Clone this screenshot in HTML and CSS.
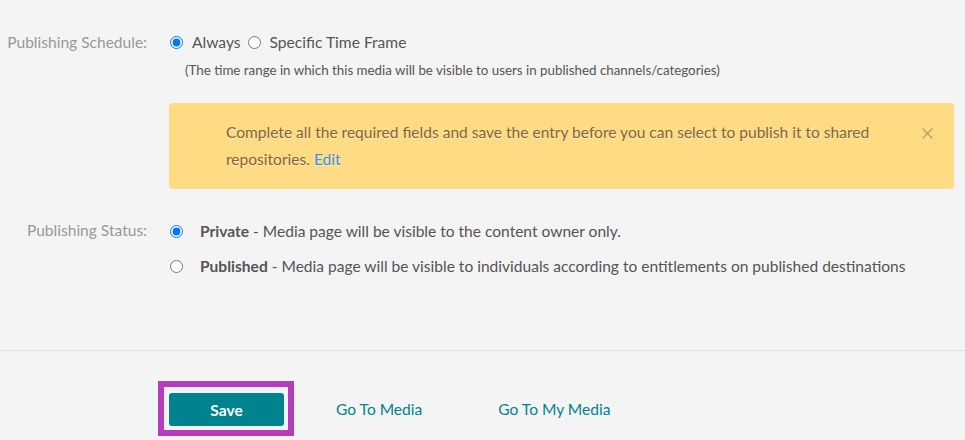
FILE: index.html
```html
<!DOCTYPE html>
<html lang="en">
<head>
<meta charset="utf-8">
<title>Publishing</title>
<link rel="stylesheet" href="styles.css">
</head>
<body>
<main class="form">
  <section class="row">
    <div class="label">Publishing Schedule:</div>
    <div class="field">
      <div class="inline-options">
        <label class="opt"><input type="radio" name="sched" checked><span>Always</span></label>
        <label class="opt"><input type="radio" name="sched"><span>Specific Time Frame</span></label>
      </div>
      <p class="help">(The time range in which this media will be visible to users in published channels/categories)</p>
      <div class="alert">
        <p>Complete all the required fields and save the entry before you can select to publish it to shared repositories. <a href="#" class="alert-link">Edit</a></p>
        <button class="close" type="button" aria-label="Close">
          <svg width="11" height="11" viewBox="0 0 11 11"><path d="M0.5 0.5 L10.5 10.5 M10.5 0.5 L0.5 10.5" stroke="#b9a168" stroke-width="1.4" fill="none"/></svg>
        </button>
      </div>
    </div>
  </section>

  <section class="row status">
    <div class="label">Publishing Status:</div>
    <div class="field stacked">
      <label class="opt wide"><input type="radio" name="status" checked><span><b>Private</b> - Media page will be visible to the content owner only.</span></label>
      <label class="opt wide"><input type="radio" name="status"><span><b>Published</b> - Media page will be visible to individuals according to entitlements on published destinations</span></label>
    </div>
  </section>
</main>

<footer class="actions">
  <div class="focus-ring"><button class="btn-save" type="button">Save</button></div>
  <a href="#" class="link">Go To Media</a>
  <a href="#" class="link">Go To My Media</a>
</footer>
</body>
</html>
```

FILE: styles.css
```css
* { box-sizing: border-box; }
html, body { margin: 0; padding: 0; }
body {
  background: #f4f4f4;
  font-family: Lato, "Open Sans", Arial, sans-serif;
  color: #555;
  width: 965px;
  height: 440px;
  overflow: hidden;
}
.form { padding-top: 32px; }
.row {
  display: grid;
  grid-template-columns: 147px 1fr;
  column-gap: 22px;
  padding-right: 11px;
}
.label {
  text-align: right;
  color: #999;
  font-size: 15.55px;
  line-height: 20px;
  white-space: nowrap;
}
.inline-options { display: flex; align-items: center; gap: 6px; }
.opt {
  display: flex;
  align-items: center;
  font-size: 15.6px;
  line-height: 20px;
  color: #555;
}
.opt input {
  width: 13px;
  height: 13px;
  margin: 0 9px 0 1px;
  flex: none;
}
.help {
  margin: 10px 0 0 16px;
  font-size: 13.33px;
  line-height: 16px;
  color: #555;
}
.alert {
  position: relative;
  margin-top: 25px;
  background: #ffdb83;
  border-radius: 4px;
  padding: 16px 70px 16px 57px;
  color: #86643a;
  text-shadow: 0 1px 0 rgba(255,255,255,0.5);
  font-size: 15.55px;
  line-height: 27px;
}
.alert p { margin: 0; }
.alert-link { color: #3d8fe0; text-decoration: none; }
.close {
  position: absolute;
  top: 25px;
  right: 21px;
  border: 0;
  background: none;
  padding: 0;
  width: 11px;
  height: 11px;
  line-height: 0;
}
.status { margin-top: 32px; }
.status .label { line-height: 18px; }
.stacked { display: flex; flex-direction: column; gap: 15px; }
.wide { font-size: 15.55px; }
.wide input { margin-right: 17px; }
.wide b { font-weight: 700; }

.actions {
  margin-top: 74px;
  border-top: 1px solid #e0e0e0;
  padding: 30px 0 0 158px;
  display: flex;
  align-items: center;
}
.focus-ring {
  border: 6px solid #b53cbb;
  padding: 6px 4px 4px 5px;
  margin-right: 4px;
}
.btn-save {
  display: block;
  width: 115px;
  height: 33px;
  border: 0;
  border-radius: 3px;
  background: #00828f;
  color: #fff;
  font-family: Lato, Arial, sans-serif;
  font-weight: 700;
  font-size: 15.55px;
}
.link {
  padding: 0 38px;
  color: #00838f;
  text-decoration: none;
  font-size: 15.55px;
}
```
